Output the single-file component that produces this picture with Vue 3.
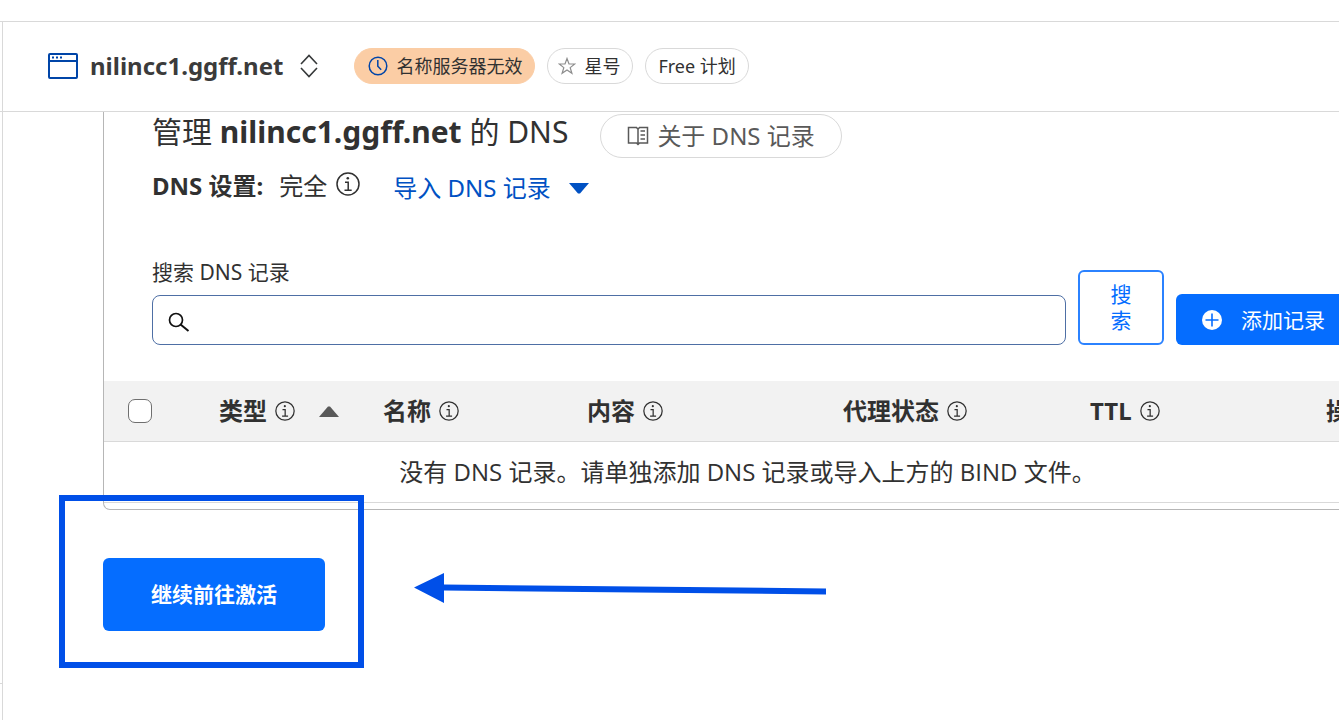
<script setup>
import { h, ref } from 'vue'

const query = ref('')
const allSelected = ref(false)

const columns = [
  { key: 'type', label: '类型', info: true, sorted: true },
  { key: 'name', label: '名称', info: true },
  { key: 'content', label: '内容', info: true },
  { key: 'proxy', label: '代理状态', info: true },
  { key: 'ttl', label: 'TTL', info: true },
  { key: 'actions', label: '操作', info: false }
]

const InfoIcon = () =>
  h('svg', { viewBox: '0 0 24 24', fill: 'none', stroke: 'currentColor', 'stroke-width': 1.5, 'aria-hidden': 'true' }, [
    h('circle', { cx: 12, cy: 12, r: 11 }),
    h('path', { d: 'M9 10.200h3.200v8M8.500 18.200h7.200' }),
    h('circle', { cx: 11.8, cy: 6.2, r: 1.3, fill: 'currentColor', stroke: 'none' })
  ])
</script>

<template>
  <div class="page">
    <div class="topbar"></div>
    <div class="shell">
      <aside class="rail">
        <div class="rail-head"></div>
        <div class="rail-body"></div>
        <div class="rail-foot"></div>
      </aside>
      <div class="content">
        <header class="zone">
          <svg class="window-icon" viewBox="0 0 30 26" fill="none" stroke="#0045a8" aria-hidden="true">
            <rect x="1" y="1" width="28" height="24" rx="1" stroke-width="2" />
            <path d="M1 8h28" stroke-width="2" />
            <path d="M4 4.500h2M8 4.500h2M12 4.500h2" stroke-width="2" />
          </svg>
          <span class="domain">nilincc1.ggff.net</span>
          <button class="switcher" type="button" aria-label="切换域名">
            <svg viewBox="0 0 18 24" fill="none" stroke="#36393a" stroke-width="1.600" aria-hidden="true">
              <path d="M1 10 9 1.500 17 10M1 14l8 8.500L17 14" />
            </svg>
          </button>
          <span class="badge badge-warning">
            <svg class="clock" viewBox="0 0 20 20" fill="none" stroke="#0045a8" stroke-width="1.500" aria-hidden="true">
              <circle cx="10" cy="10" r="8.800" />
              <path d="M9.800 4v6.200l3.400 3.600" />
            </svg>
            名称服务器无效
          </span>
          <button class="badge badge-star" type="button">
            <svg class="star" viewBox="0 0 18 18" fill="none" stroke="#8d8d8d" stroke-width="1.200" aria-hidden="true">
              <path d="M9 1.500l2 5.500h5.800l-4.600 3.600 1.700 5.700L9 12.900l-4.900 3.400 1.700-5.700L1.200 7H7z" />
            </svg>
            星号
          </button>
          <span class="badge">Free 计划</span>
        </header>

        <main class="main">
          <section class="panel">
            <div class="intro">
              <div class="title-row">
                <h1>管理 <strong>nilincc1.ggff.net</strong> 的 DNS</h1>
                <a class="about" href="#">
                  <svg viewBox="0 0 22 20" fill="none" stroke="#595959" stroke-width="1.500" aria-hidden="true">
                    <path d="M11 3.200 9.500 1.500H1.500V17H9.500L11 18.500 12.500 17h8V1.500h-8zM11 3.200V18.500" />
                    <path d="M13.500 5h4.500M13.500 9h4.500M13.500 13h4.500" />
                  </svg>
                  关于 DNS 记录
                </a>
              </div>
              <div class="setup-row">
                <strong>DNS 设置:</strong>
                <span>完全</span>
                <InfoIcon class="info-large" />
                <button class="import" type="button">
                  导入 DNS 记录
                  <svg viewBox="0 0 20 11" aria-hidden="true"><path d="M0 0h20L11 10.500H9z" fill="#0051c3" /></svg>
                </button>
              </div>
              <form class="search" @submit.prevent>
                <div class="field">
                  <label for="dns-search">搜索 DNS 记录</label>
                  <div class="input-box">
                    <svg viewBox="0 0 22 20" fill="none" stroke="#111" stroke-width="1.700" aria-hidden="true">
                      <circle cx="8" cy="8" r="6.500" />
                      <path d="M12.600 12.500 20.500 19" stroke-width="2" />
                    </svg>
                    <input id="dns-search" v-model="query" type="text" />
                  </div>
                </div>
                <button class="search-button" type="submit">搜<br />索</button>
                <button class="add-button" type="button">
                  <svg viewBox="0 0 20 20" aria-hidden="true">
                    <circle cx="10" cy="10" r="10" fill="#fff" />
                    <path d="M10 3.500v13M3.500 10h13" stroke="#056dff" stroke-width="1.600" />
                  </svg>
                  添加记录
                </button>
              </form>
            </div>

            <table class="records">
              <thead>
                <tr>
                  <th class="col-check"><input v-model="allSelected" type="checkbox" aria-label="全选" /></th>
                  <th v-for="column in columns" :key="column.key" :class="`col-${column.key}`">
                    <span class="heading">
                      {{ column.label }}
                      <InfoIcon v-if="column.info" class="info-small" />
                      <svg v-if="column.sorted" class="sort" viewBox="0 0 20 11" aria-hidden="true">
                        <path d="M0 11h20L11 .500H9z" fill="#595959" />
                      </svg>
                    </span>
                  </th>
                </tr>
              </thead>
              <tbody>
                <tr>
                  <td colspan="7">没有 DNS 记录。请单独添加 DNS 记录或导入上方的 BIND 文件。</td>
                </tr>
              </tbody>
            </table>
          </section>

          <div class="continue-row">
            <div class="highlight"></div>
            <button class="continue" type="button">继续前往激活</button>
            <svg class="arrow" viewBox="0 0 412 30" aria-hidden="true">
              <path d="M0 14.500 30 0v11.500L412 15.500v6L30 17.500V30z" fill="#004fe8" />
            </svg>
          </div>
        </main>
      </div>
    </div>
  </div>
</template>

<style>
body {
  background: #fff;
}
</style>

<style scoped>
.page,
.page * {
  box-sizing: border-box;
}
.page {
  display: flex;
  flex-direction: column;
  min-height: 100vh;
  overflow: hidden;
  color: #313131;
  font-family: "Noto Sans", "Noto Sans CJK SC", sans-serif;
  font-size: 24px;
  line-height: 32px;
}
button {
  font-family: inherit;
  cursor: pointer;
}
svg {
  flex: none;
  display: block;
}
.topbar {
  height: 22px;
  border-bottom: 1px solid #d9d9d9;
}
.shell {
  flex: 1;
  display: flex;
}
.rail {
  flex: none;
  width: 3px;
  display: flex;
  flex-direction: column;
  border-right: 1px solid #d9d9d9;
}
.rail-head {
  height: 90px;
  border-bottom: 1px solid #d9d9d9;
}
.rail-body {
  flex: 1;
}
.rail-foot {
  height: 37px;
  border-top: 1px solid #d9d9d9;
}
.content {
  flex: 1;
  min-width: 0;
}
.zone {
  display: flex;
  align-items: center;
  height: 90px;
  padding: 0 0 1px 45px;
  border-bottom: 1px solid #d9d9d9;
}
.window-icon {
  width: 30px;
  height: 26px;
  margin-right: 12px;
}
.domain {
  font-weight: 700;
  color: #3b3b3b;
}
.switcher {
  margin: 0 36px 0 17px;
  padding: 0;
  border: 0;
  background: none;
}
.switcher svg {
  width: 18px;
  height: 24px;
}
.badge {
  display: flex;
  align-items: center;
  height: 36px;
  margin-right: 12px;
  padding: 0 12px;
  border: 1px solid #d9d9d9;
  border-radius: 18px;
  background: #fff;
  color: #313131;
  font-size: 18px;
  line-height: 24px;
  white-space: nowrap;
}
.badge-warning {
  padding: 0 12px 0 13px;
  border-color: #fbcda5;
  background: #fbcda5;
}
.badge-star {
  padding: 0 12px 0 10px;
}
.clock {
  width: 20px;
  height: 20px;
  margin-right: 8px;
}
.star {
  width: 18px;
  height: 18px;
  margin-right: 8px;
}
.main {
  padding-left: 100px;
}
.panel {
  margin-right: -53px;
  padding-bottom: 6px;
  border: 1px solid #b6b6b6;
  border-top: 0;
  border-radius: 0 0 7px 7px;
}
.intro {
  padding: 0 40px 36px 48px;
}
.title-row {
  display: flex;
  align-items: center;
  padding-top: 2px;
}
h1 {
  margin: 0 32px 8px 0;
  font-size: 30px;
  font-weight: 400;
  line-height: 36px;
  white-space: nowrap;
}
.about {
  display: flex;
  align-items: center;
  height: 44px;
  padding: 0 26px;
  border: 1px solid #d9d9d9;
  border-radius: 22px;
  color: #595959;
  text-decoration: none;
  white-space: nowrap;
}
.about svg {
  width: 22px;
  height: 20px;
  margin-right: 8px;
}
.setup-row {
  display: flex;
  align-items: center;
  margin-top: 10px;
  white-space: nowrap;
}
.setup-row strong {
  margin-right: 16px;
}
.info-large {
  width: 24px;
  height: 24px;
  margin: 0 33px 4px 9px;
}
.import {
  display: flex;
  align-items: center;
  padding: 4px 0 0;
  border: 0;
  background: none;
  color: #0051c3;
  font-size: 24px;
  line-height: 32px;
}
.import svg {
  width: 20px;
  height: 11px;
  margin-left: 18px;
}
.search {
  display: flex;
  align-items: flex-end;
  gap: 12px;
  margin-top: 53px;
}
.field {
  flex: 1;
}
.field label {
  display: block;
  margin-bottom: 8px;
  font-size: 21px;
  line-height: 30px;
}
.input-box {
  display: flex;
  align-items: center;
  height: 50px;
  padding-left: 15px;
  border: 1px solid #4e6fa5;
  border-radius: 8px;
}
.input-box svg {
  width: 22px;
  height: 20px;
  margin-top: 4px;
}
.input-box input {
  flex: 1;
  min-width: 0;
  height: 100%;
  padding: 0 12px;
  border: 0;
  outline: 0;
  background: none;
  font: inherit;
}
.search-button {
  width: 86px;
  height: 75px;
  padding: 0 0 2px;
  border: 2px solid #2b82ff;
  border-radius: 6px;
  background: #fff;
  color: #056dff;
  font-size: 21px;
  line-height: 26px;
}
.add-button {
  display: flex;
  align-items: center;
  height: 51px;
  padding: 0 26px;
  border: 0;
  border-radius: 6px;
  background: #056dff;
  color: #fff;
  font-size: 21px;
  line-height: 30px;
  white-space: nowrap;
}
.add-button svg {
  width: 20px;
  height: 20px;
  margin-right: 19px;
}
.records {
  width: 100%;
  border-collapse: separate;
  border-spacing: 0;
  table-layout: fixed;
}
th {
  height: 61px;
  padding: 0 0 0 24px;
  border-bottom: 1px solid #d9d9d9;
  background: #f2f2f2;
  text-align: left;
  white-space: nowrap;
}
td {
  height: 61px;
  padding: 0;
  border-bottom: 1px solid #d9d9d9;
  font-family: "Open Sans", "Noto Sans CJK SC", sans-serif;
  text-align: center;
}
.col-check { width: 91px; }
.col-type { width: 164px; }
.col-name { width: 204px; }
.col-content { width: 256px; }
.col-proxy { width: 247px; }
.col-ttl { width: 236px; }
.heading {
  display: flex;
  align-items: center;
}
.info-small {
  width: 20px;
  height: 20px;
  margin-left: 8px;
}
.sort {
  width: 20px;
  height: 11px;
  margin-left: 24px;
}
th input {
  display: block;
  width: 24px;
  height: 24px;
  margin: 0;
  border: 1px solid #6f6f6f;
  border-radius: 7px;
  background: #fff;
  appearance: none;
}
th input:checked {
  background: #056dff;
}
.continue-row {
  position: relative;
  display: flex;
  padding: 48px 0;
}
.continue {
  padding: 20px 48px 21px;
  border: 0;
  border-radius: 6px;
  background: #056dff;
  color: #fff;
  font-size: 21px;
  font-weight: 700;
  line-height: 32px;
}
.highlight {
  position: absolute;
  top: -15px;
  left: -44px;
  width: 305px;
  height: 173px;
  border: 6px solid #004fe8;
  pointer-events: none;
}
.arrow {
  position: absolute;
  top: 63px;
  left: 311px;
  width: 412px;
  height: 30px;
}
</style>
